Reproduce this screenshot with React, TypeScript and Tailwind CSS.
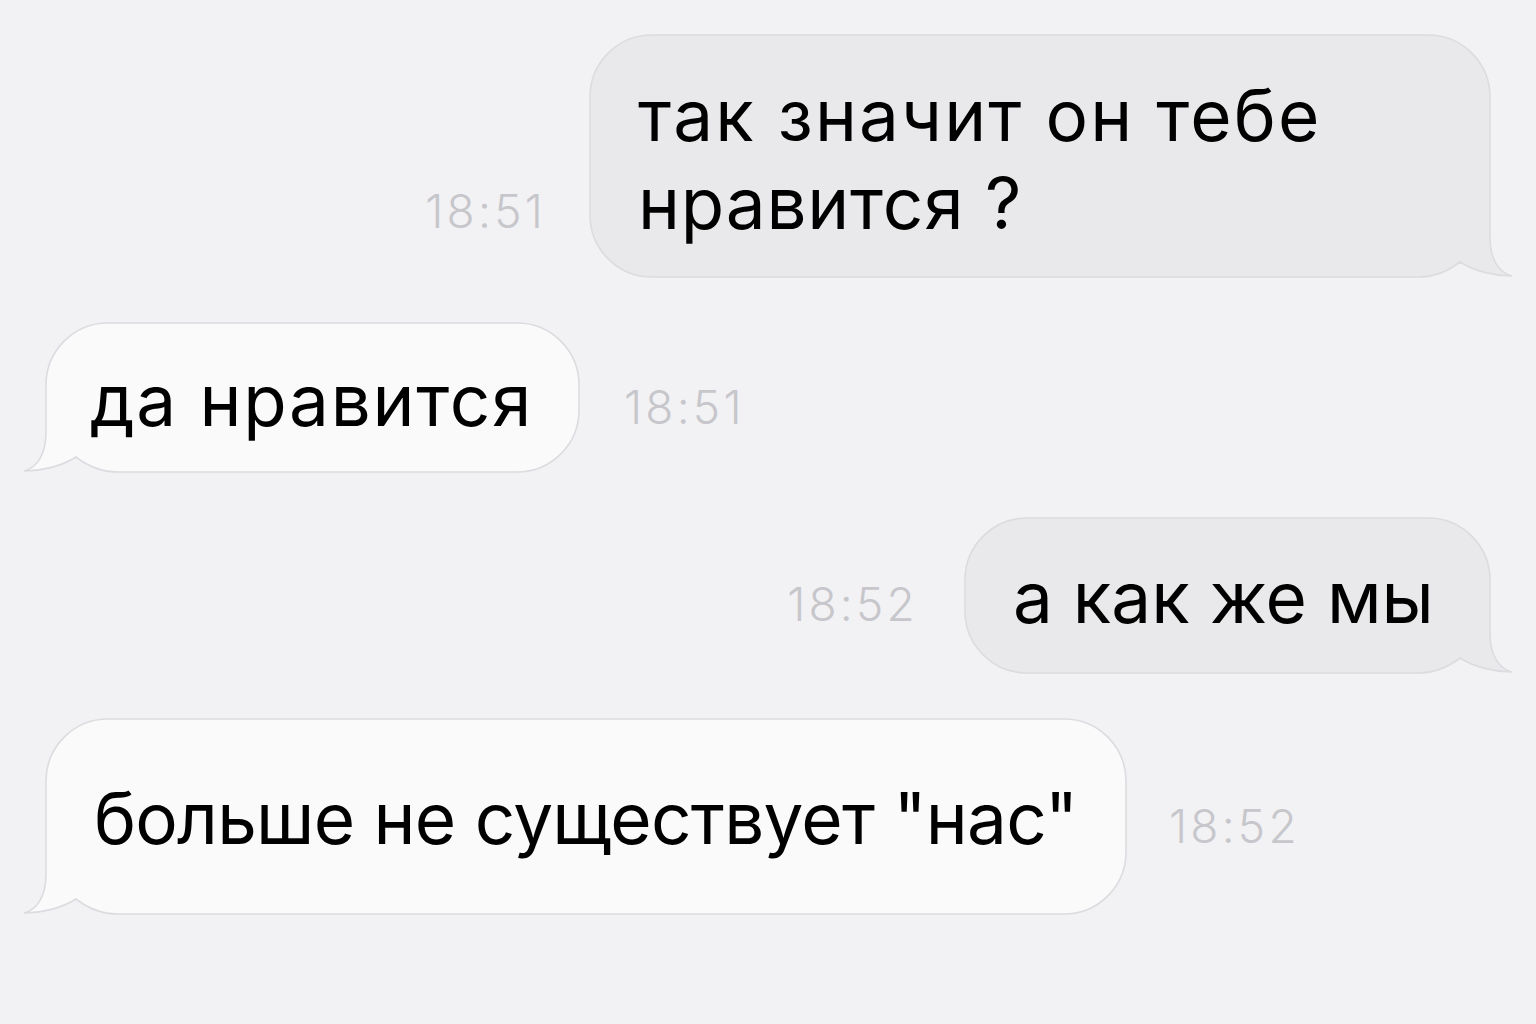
import React from "react";

type Side = "out" | "in";

const R = 62;

// Body outline with the tail on the right-bottom corner (body spans 0..w, 0..h).
function bubblePath(w: number, h: number) {
  return [
    `M ${R} 0`,
    `H ${w - R}`,
    `A ${R} ${R} 0 0 1 ${w} ${R}`,
    `V ${h - 40}`,
    `C ${w} ${h - 16} ${w + 10} ${h - 4} ${w + 22} ${h - 1}`,
    `C ${w + 4} ${h - 1} ${w - 16} ${h - 6} ${w - 30} ${h - 15}`,
    `C ${w - 44} ${h - 4} ${w - 60} ${h} ${w - R - 10} ${h}`,
    `H ${R}`,
    `A ${R} ${R} 0 0 1 0 ${h - R}`,
    `V ${R}`,
    `A ${R} ${R} 0 0 1 ${R} 0`,
    "Z",
  ].join(" ");
}

function Bubble({
  w,
  h,
  side,
  pt,
  children,
}: {
  w: number;
  h: number;
  side: Side;
  pt: number;
  children: React.ReactNode;
}) {
  const fill = side === "out" ? "#e9e9ec" : "#fafafa";
  const pad = 32;
  return (
    <div className="relative shrink-0" style={{ width: w, height: h }}>
      <svg
        className="absolute overflow-visible"
        style={{ left: -pad, top: -pad, width: w + pad * 2, height: h + pad * 2 }}
        viewBox={`0 0 ${w + pad * 2} ${h + pad * 2}`}
      >
        <g
          transform={
            side === "out"
              ? `translate(${pad} ${pad})`
              : `translate(${pad + w} ${pad}) scale(-1 1)`
          }
        >
          <path d={bubblePath(w, h)} fill={fill} stroke="#dcdce0" strokeWidth={1.6} />
        </g>
      </svg>
      <div
        className="relative pl-[48px] text-[71px] leading-[88px] text-black whitespace-nowrap"
        style={{ paddingTop: pt }}
      >
        {children}
      </div>
    </div>
  );
}

function Time({ children, mb }: { children: React.ReactNode; mb: number }) {
  return (
    <div
      className="shrink-0 text-[46px] leading-none font-light tracking-[0.07em] text-[#c6c6cb]"
      style={{ marginBottom: mb }}
    >
      {children}
    </div>
  );
}

export default function App() {
  return (
    <div
      className="w-[1536px] h-[1024px] overflow-hidden bg-[#f2f2f4] px-[46px] pt-[35px] flex flex-col gap-[46px]"
      style={{ fontFamily: "Inter, 'Noto Sans', sans-serif" }}
    >
      <div className="flex items-end justify-end gap-[44px]">
        <Time mb={43}>18:51</Time>
        <Bubble w={900} h={242} side="out" pt={36}>
          <div className="tracking-[2.1px]">так значит он тебе</div>
          <div className="tracking-[0.8px]">нравится ?</div>
        </Bubble>
      </div>

      <div className="flex items-end justify-start gap-[45px]">
        <Bubble w={533} h={149} side="in" pt={33}>
          <div className="-ml-[4px] tracking-[1.7px]">да нравится</div>
        </Bubble>
        <Time mb={42}>18:51</Time>
      </div>

      <div className="flex items-end justify-end gap-[47px]">
        <Time mb={46}>18:52</Time>
        <Bubble w={525} h={155} side="out" pt={35}>
          <div>а как же мы</div>
        </Bubble>
      </div>

      <div className="flex items-end justify-start gap-[43px]">
        <Bubble w={1080} h={195} side="in" pt={55}>
          <div className="tracking-[-0.75px]">больше не существует "нас"</div>
        </Bubble>
        <Time mb={65}>18:52</Time>
      </div>
    </div>
  );
}
